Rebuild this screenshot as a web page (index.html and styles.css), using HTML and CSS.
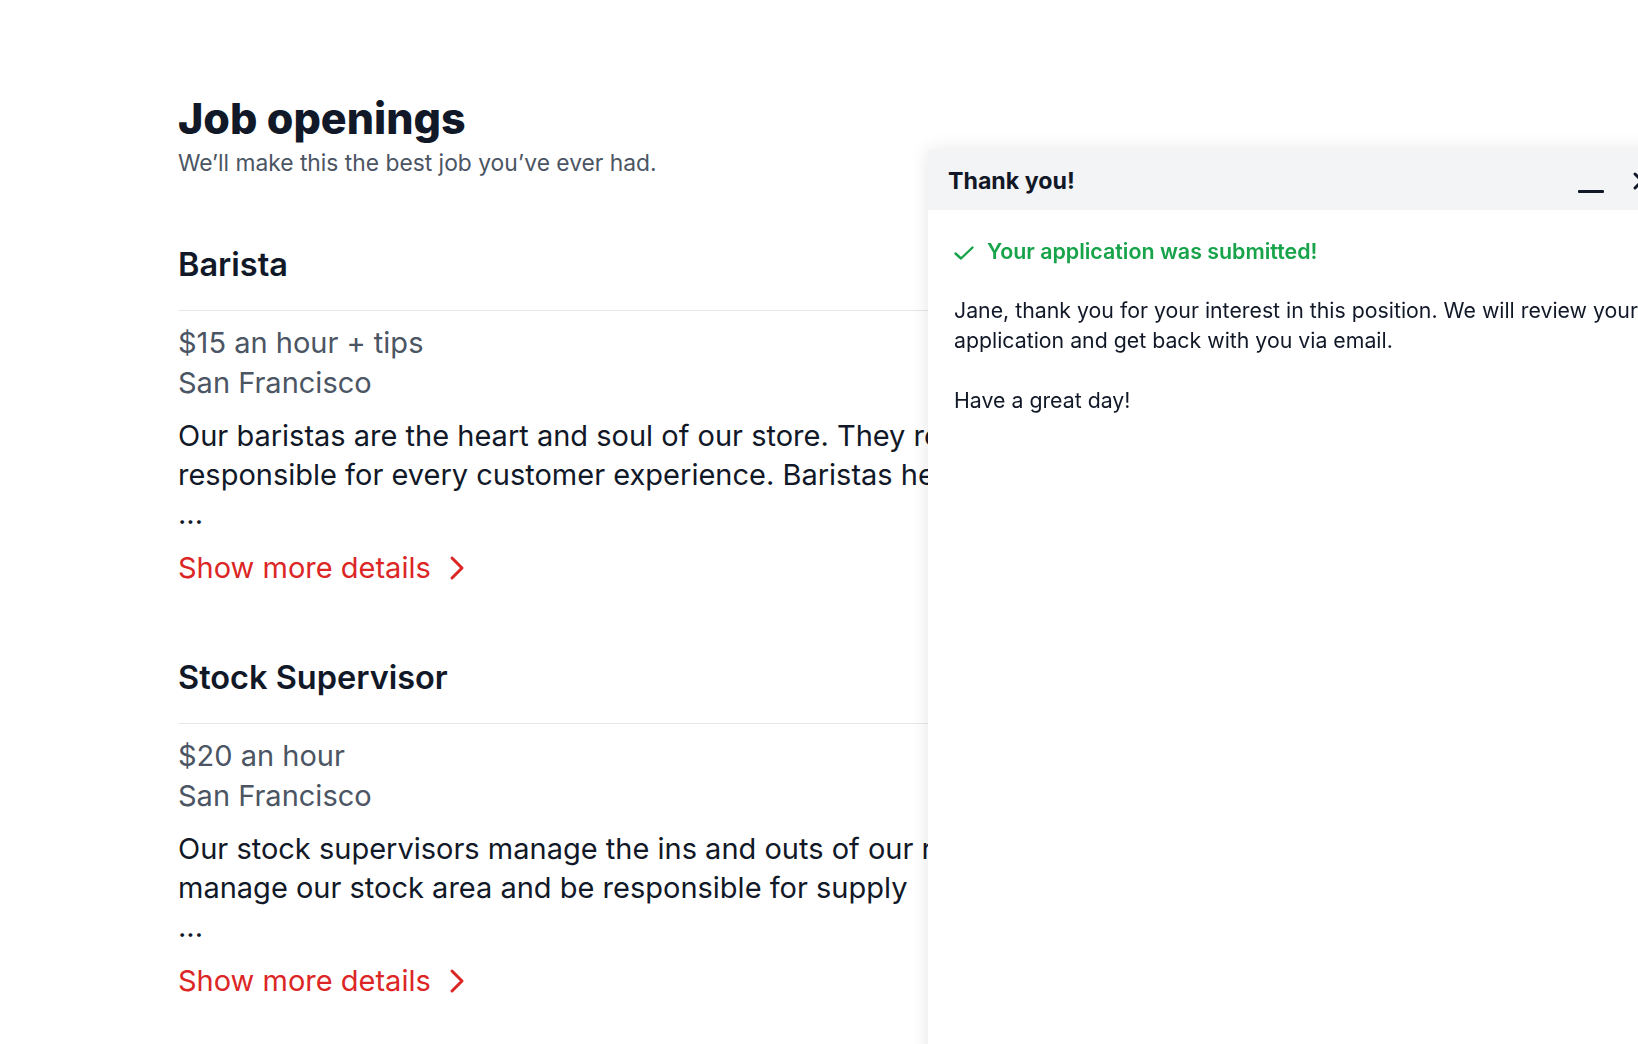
FILE: index.html
```html
<!DOCTYPE html>
<html lang="en">
<head>
<meta charset="utf-8">
<title>Job openings</title>
<link rel="stylesheet" href="styles.css">
</head>
<body>
<main class="page">
  <header class="page-head">
    <h1 class="page-title">Job openings</h1>
    <p class="page-sub">We’ll make this the best job you’ve ever had.</p>
  </header>

  <section class="job">
    <h2 class="job-title">Barista</h2>
    <div class="job-meta">
      <div>$15 an hour + tips</div>
      <div>San Francisco</div>
    </div>
    <p class="job-desc">Our baristas are the heart and soul of our store. They really are responsible for every customer experience. Baristas help <span class="ellipsis">...</span></p>
    <a class="more" href="#">Show more details
      <svg class="chev" viewBox="0 0 16 26" width="16" height="26"><path d="M3 3 L13 13 L3 23" fill="none" stroke="currentColor" stroke-width="3" stroke-linecap="round" stroke-linejoin="round"/></svg>
    </a>
  </section>

  <section class="job">
    <h2 class="job-title">Stock Supervisor</h2>
    <div class="job-meta">
      <div>$20 an hour</div>
      <div>San Francisco</div>
    </div>
    <p class="job-desc">Our stock supervisors manage the ins and outs of our restaurant. They manage our stock area and be responsible for supply <span class="ellipsis">...</span></p>
    <a class="more" href="#">Show more details
      <svg class="chev" viewBox="0 0 16 26" width="16" height="26"><path d="M3 3 L13 13 L3 23" fill="none" stroke="currentColor" stroke-width="3" stroke-linecap="round" stroke-linejoin="round"/></svg>
    </a>
  </section>
</main>

<aside class="panel">
  <div class="panel-head">
    <h3 class="panel-title">Thank you!</h3>
    <div class="panel-actions">
      <span class="min-btn"></span>
      <svg class="close-btn" viewBox="0 0 20 20" width="20" height="20"><path d="M3 3 L17 17 M17 3 L3 17" fill="none" stroke="#111827" stroke-width="3" stroke-linecap="round"/></svg>
    </div>
  </div>
  <div class="panel-body">
    <div class="success">
      <svg class="check" viewBox="0 0 20 14" width="20" height="14"><path d="M1.5 7.5 L7 12.5 L18.5 1.5" fill="none" stroke="currentColor" stroke-width="2.4" stroke-linecap="round" stroke-linejoin="round"/></svg>
      <span>Your application was submitted!</span>
    </div>
    <p class="msg">Jane, thank you for your interest in this position. We will review your application and get back with you via email.</p>
    <p class="msg">Have a great day!</p>
  </div>
</aside>
</body>
</html>
```

FILE: styles.css
```css
html, body {
  margin: 0;
  padding: 0;
  overflow: hidden;
  background: #ffffff;
}

body {
  font-family: Inter, "Noto Sans", "Liberation Sans", sans-serif;
  color: #111827;
}

.page {
  max-width: 1282px;
  margin: 0 auto;
  padding-top: 94px;
}

.page-title {
  margin: 0;
  font-size: 43px;
  line-height: 48px;
  font-weight: 800;
  color: #111827;
}

.page-sub {
  margin: 7px 0 0;
  font-size: 22.8px;
  line-height: 28px;
  color: #4b5563;
}

.job {
  margin-top: 69px;
}

.job + .job {
  margin-top: 71px;
}

.job-title {
  margin: 0;
  padding-bottom: 26px;
  border-bottom: 1px solid #e5e7eb;
  font-size: 32.5px;
  line-height: 38px;
  font-weight: 600;
  color: #111827;
}

.job-meta {
  margin-top: 12px;
  font-size: 29px;
  line-height: 40px;
  color: #4b5563;
}

.job-desc {
  margin: 13px 0 0;
  max-width: 970px;
  font-size: 29px;
  line-height: 39px;
  color: #111827;
}

.ellipsis {
  display: block;
}

.more {
  display: inline-flex;
  align-items: center;
  gap: 18px;
  margin-top: 15px;
  font-size: 29px;
  line-height: 40px;
  color: #dc2626;
  text-decoration: none;
}

.chev {
  display: block;
}

.panel {
  position: fixed;
  left: 928px;
  top: 150px;
  bottom: -20px;
  width: 760px;
  background: #ffffff;
  box-shadow: 0 0 18px rgba(17, 24, 39, 0.10);
}

.panel-head {
  display: flex;
  align-items: center;
  justify-content: space-between;
  height: 60px;
  padding: 0 20px;
  background: #f3f4f6;
}

.panel-title {
  margin: 0;
  padding-top: 2px;
  font-size: 23.2px;
  line-height: 28px;
  font-weight: 700;
  color: #111827;
}

.panel-actions {
  display: flex;
  align-items: center;
  gap: 28px;
  margin-right: 16px;
}

.min-btn {
  display: block;
  width: 26px;
  height: 3px;
  margin-top: 22px;
  background: #111827;
  border-radius: 1px;
}

.close-btn {
  display: block;
  margin-top: 2px;
}

.panel-body {
  padding: 27px 26px;
}

.success {
  display: flex;
  align-items: center;
  gap: 13px;
  font-size: 21.4px;
  line-height: 28px;
  font-weight: 600;
  color: #16a34a;
}

.check {
  display: block;
  margin-top: 4px;
}

.msg {
  margin: 30px 0 0;
  font-size: 21.3px;
  line-height: 30px;
  color: #111827;
}
```
